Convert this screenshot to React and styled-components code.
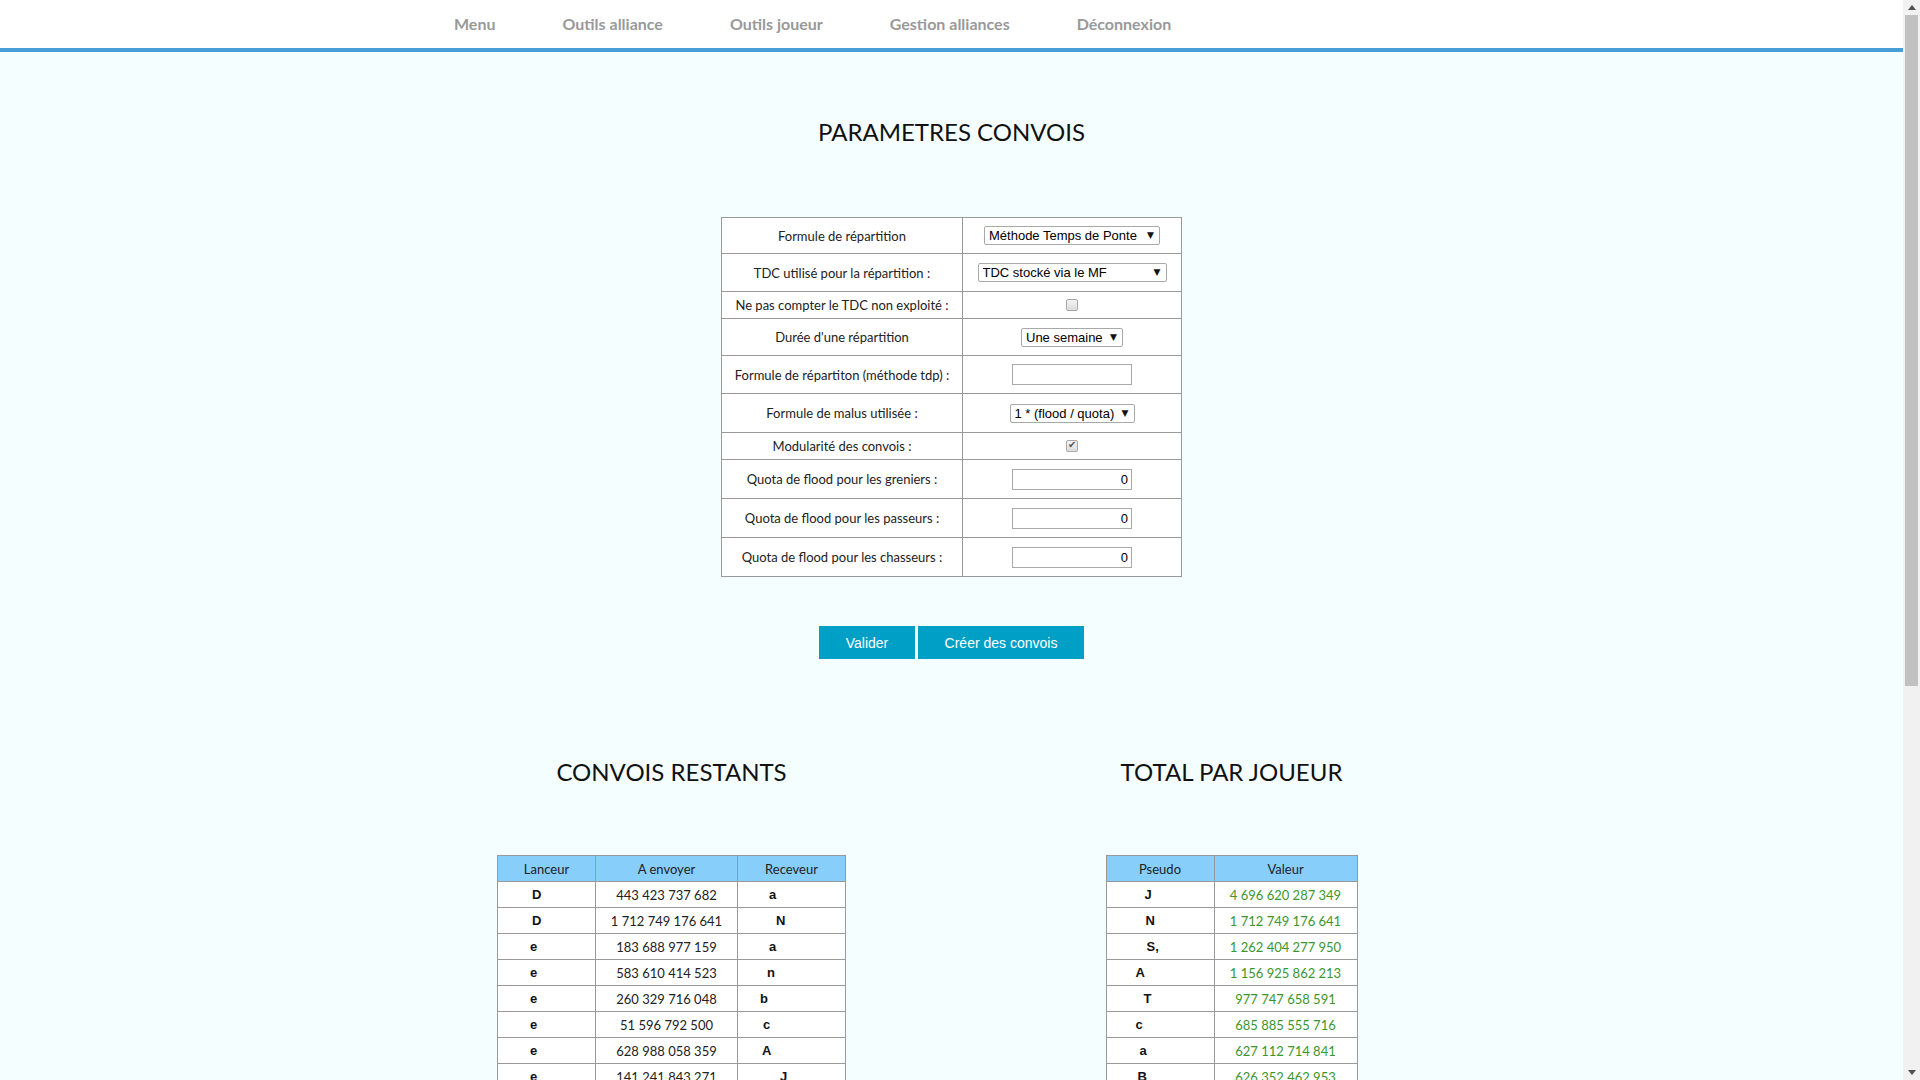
import styled, { createGlobalStyle } from "styled-components";

const GlobalStyle = createGlobalStyle`
  html, body {
    margin: 0;
    padding: 0;
  }
  body {
    background-color: #f4fefe;
    font-family: Lato, "Open Sans", sans-serif;
    color: #222;
  }
`;

const Page = styled.div`
  margin-right: 17px;
`;

/* fake browser scrollbar, as seen on the capture */
const ScrollTrack = styled.div`
  position: fixed;
  top: 0;
  right: 0;
  bottom: 0;
  width: 17px;
  background-color: #f1f1f1;
  display: flex;
  flex-direction: column;
  align-items: center;
`;

const ScrollArrow = styled.div`
  height: 15px;
  width: 17px;
  display: flex;
  align-items: center;
  justify-content: center;
`;

const ScrollThumb = styled.div`
  width: 13px;
  height: 671px;
  background-color: #c1c1c1;
`;

const ScrollRest = styled.div`
  flex: 1;
`;

const NavBar = styled.nav`
  background-color: #ffffff;
  height: 48px;
  box-sizing: content-box;
  border-bottom: 4px solid #489ed6;
  display: flex;
  align-items: center;
  padding-left: 454px;
  gap: 67px;
`;

const NavLink = styled.a`
  font-family: Lato, sans-serif;
  font-weight: 700;
  font-size: 16px;
  color: #999999;
  text-decoration: none;
  margin-bottom: 2px;
  cursor: pointer;
`;

const Main = styled.main`
  display: flex;
  flex-direction: column;
  align-items: center;
  padding-bottom: 133px;
`;

const Title = styled.h2`
  margin: ${({ mt }) => mt}px 0 0;
  font-family: Lato, sans-serif;
  font-weight: 400;
  font-size: 24px;
  line-height: 28px;
  color: #111;
  text-align: center;
`;

const ParamTable = styled.table`
  margin-top: 71px;
  border-collapse: collapse;
  background-color: #ffffff;
  border: 1px solid #999;
  font-size: 13px;

  td {
    border: 1px solid #999;
    padding: 0;
    text-align: center;
    vertical-align: middle;
  }
`;

const LabelCell = styled.td`
  width: 240px;
  height: ${({ h }) => h - 1}px;
  color: #222;
`;

const ValueCell = styled.td`
  width: 218px;
`;

const SelectWrap = styled.span`
  position: relative;
  display: inline-block;
  vertical-align: middle;
`;

const Select = styled.select`
  appearance: none;
  -webkit-appearance: none;
  width: ${({ w }) => w}px;
  height: 19px;
  border: 1px solid #a9a9a9;
  border-radius: 2px;
  background-color: #ffffff;
  font-family: "Liberation Sans", Arial, sans-serif;
  font-size: 13px;
  color: #000;
  padding: 0 18px 0 4px;
  margin: 0;
  display: block;
`;

const Arrow = styled.span`
  position: absolute;
  right: 6px;
  top: 4px;
  font-family: "DejaVu Sans", sans-serif;
  font-size: 9px;
  line-height: 11px;
  color: #111;
  pointer-events: none;
`;

const TextInput = styled.input`
  width: 120px;
  height: 21px;
  box-sizing: border-box;
  border: 1px solid #a9a9a9;
  background-color: #ffffff;
  font-family: "Liberation Sans", Arial, sans-serif;
  font-size: 13px;
  text-align: ${({ right }) => (right ? "right" : "left")};
  padding: 1px 3px;
  margin: 0;
  vertical-align: middle;
`;

const CheckBox = styled.input.attrs({ type: "checkbox" })`
  appearance: none;
  -webkit-appearance: none;
  width: 12px;
  height: 12px;
  margin: 0 0 2px 0;
  border: 1px solid #a8a8a8;
  border-radius: 2px;
  background: linear-gradient(#f4f4f4, #dcdcdc);
  position: relative;
  vertical-align: middle;

  &:checked::after {
    content: "✔";
    position: absolute;
    left: 1px;
    top: -2px;
    font-size: 10px;
    color: #555;
    font-family: "DejaVu Sans", sans-serif;
  }
`;

const ButtonRow = styled.div`
  margin-top: 49px;
  display: flex;
  gap: 3px;
`;

const Button = styled.button`
  width: ${({ w }) => w}px;
  height: 33px;
  padding: 0;
  border: none;
  background-color: #00a0c6;
  color: #ffffff;
  font-family: "Liberation Sans", Arial, sans-serif;
  font-size: 14px;
  cursor: pointer;
`;

const Columns = styled.div`
  width: 1120px;
  display: grid;
  grid-template-columns: 1fr 1fr;
`;

const Column = styled.section`
  display: flex;
  flex-direction: column;
  align-items: center;
`;

const DataTable = styled.table`
  margin-top: 69px;
  border-collapse: collapse;
  background-color: #ffffff;
  font-size: 13px;

  th,
  td {
    border: 1px solid #999;
    height: 25px;
    padding: 0;
    text-align: center;
    vertical-align: middle;
  }

  th {
    background-color: #87cefa;
    font-weight: 400;
    color: #222;
  }
`;

const HeadCell = styled.th`
  width: ${({ w }) => w - 1}px;
`;

const NameCell = styled.td`
  && {
    text-align: left;
    padding-left: ${({ pad }) => pad}px;
  }
  font-family: "Liberation Sans", Arial, sans-serif;
  font-weight: 700;
  font-size: 13px;
  color: #111;
`;

const NumberCell = styled.td`
  color: ${({ green }) => (green ? "#3b962c" : "#222")};
`;

const params = [
  { label: "Formule de répartition", h: 36, kind: "select", w: 176, value: "Méthode Temps de Ponte" },
  { label: "TDC utilisé pour la répartition :", h: 38, kind: "select", w: 189, value: "TDC stocké via le MF" },
  { label: "Ne pas compter le TDC non exploité :", h: 27, kind: "check", checked: false },
  { label: "Durée d'une répartition", h: 37, kind: "select", w: 102, value: "Une semaine" },
  { label: "Formule de répartiton (méthode tdp) :", h: 38, kind: "input", value: "" },
  { label: "Formule de malus utilisée :", h: 39, kind: "select", w: 125, value: "1 * (flood / quota)" },
  { label: "Modularité des convois :", h: 27, kind: "check", checked: true },
  { label: "Quota de flood pour les greniers :", h: 39, kind: "input", value: "0", right: true },
  { label: "Quota de flood pour les passeurs :", h: 39, kind: "input", value: "0", right: true },
  { label: "Quota de flood pour les chasseurs :", h: 39, kind: "input", value: "0", right: true },
];

const convois = [
  ["D", 34, "443 423 737 682", "a", 31],
  ["D", 34, "1 712 749 176 641", "N", 38],
  ["e", 32, "183 688 977 159", "a", 31],
  ["e", 32, "583 610 414 523", "n", 29],
  ["e", 32, "260 329 716 048", "b", 22],
  ["e", 32, "51 596 792 500", "c", 25],
  ["e", 32, "628 988 058 359", "A", 24],
  ["e", 32, "141 241 843 271", "J", 42],
  ["e", 32, "98 517 330 412", "T", 30],
  ["S", 34, "402 118 659 730", "c", 27],
  ["S", 34, "215 774 903 286", "a", 31],
  ["S", 34, "88 402 117 954", "B", 28],
  ["A", 30, "311 960 245 178", "J", 40],
  ["A", 30, "176 338 409 622", "T", 33],
  ["T", 36, "204 519 887 130", "c", 27],
  ["T", 36, "95 631 004 775", "B", 28],
  ["c", 31, "142 886 310 529", "J", 40],
  ["a", 32, "63 275 498 016", "B", 28],
  ["a", 32, "117 904 552 381", "J", 40],
  ["B", 30, "72 118 640 905", "J", 40],
  ["B", 30, "134 527 806 219", "T", 33],
  ["n", 31, "56 084 331 762", "J", 40],
  ["n", 31, "203 611 478 095", "c", 27],
  ["b", 31, "88 930 415 207", "J", 40],
  ["b", 31, "171 399 026 584", "a", 31],
  ["c", 31, "45 712 908 133", "B", 28],
];

const totals = [
  ["J", 38, "4 696 620 287 349"],
  ["N", 39, "1 712 749 176 641"],
  ["S,", 40, "1 262 404 277 950"],
  ["A", 29, "1 156 925 862 213"],
  ["T", 37, "977 747 658 591"],
  ["c", 29, "685 885 555 716"],
  ["a", 33, "627 112 714 841"],
  ["B", 31, "626 352 462 953"],
  ["n", 32, "412 930 118 704"],
  ["b", 33, "260 329 716 048"],
  ["D", 30, "0"],
  ["e", 32, "0"],
];

const ParamControl = ({ row }) => {
  if (row.kind === "select") {
    return (
      <SelectWrap>
        <Select w={row.w} defaultValue={row.value}>
          <option>{row.value}</option>
        </Select>
        <Arrow>▼</Arrow>
      </SelectWrap>
    );
  }
  if (row.kind === "check") {
    return <CheckBox defaultChecked={row.checked} />;
  }
  return <TextInput type="text" defaultValue={row.value} right={row.right} />;
};

const FakeScrollbar = () => (
  <ScrollTrack>
    <ScrollArrow>
      <svg width="8" height="5" viewBox="0 0 8 5">
        <polygon points="4,0 8,5 0,5" fill="#505050" />
      </svg>
    </ScrollArrow>
    <ScrollThumb />
    <ScrollRest />
    <ScrollArrow>
      <svg width="8" height="5" viewBox="0 0 8 5">
        <polygon points="0,0 8,0 4,5" fill="#505050" />
      </svg>
    </ScrollArrow>
  </ScrollTrack>
);

const App = () => {
  return (
    <>
      <GlobalStyle />
      <Page>
        <NavBar>
          <NavLink>Menu</NavLink>
          <NavLink>Outils alliance</NavLink>
          <NavLink>Outils joueur</NavLink>
          <NavLink>Gestion alliances</NavLink>
          <NavLink>Déconnexion</NavLink>
        </NavBar>

        <Main>
          <Title mt={66}>PARAMETRES CONVOIS</Title>

          <ParamTable>
            <tbody>
              {params.map((row) => (
                <tr key={row.label}>
                  <LabelCell h={row.h}>{row.label}</LabelCell>
                  <ValueCell>
                    <ParamControl row={row} />
                  </ValueCell>
                </tr>
              ))}
            </tbody>
          </ParamTable>

          <ButtonRow>
            <Button w={96}>Valider</Button>
            <Button w={166}>Créer des convois</Button>
          </ButtonRow>

          <Columns>
            <Column>
              <Title mt={99}>CONVOIS RESTANTS</Title>
              <DataTable>
                <thead>
                  <tr>
                    <HeadCell w={98}>Lanceur</HeadCell>
                    <HeadCell w={142}>A envoyer</HeadCell>
                    <HeadCell w={108}>Receveur</HeadCell>
                  </tr>
                </thead>
                <tbody>
                  {convois.map(([from, fromPad, amount, to, toPad], i) => (
                    <tr key={i}>
                      <NameCell pad={fromPad}>{from}</NameCell>
                      <NumberCell>{amount}</NumberCell>
                      <NameCell pad={toPad}>{to}</NameCell>
                    </tr>
                  ))}
                </tbody>
              </DataTable>
            </Column>

            <Column>
              <Title mt={99}>TOTAL PAR JOUEUR</Title>
              <DataTable>
                <thead>
                  <tr>
                    <HeadCell w={108}>Pseudo</HeadCell>
                    <HeadCell w={143}>Valeur</HeadCell>
                  </tr>
                </thead>
                <tbody>
                  {totals.map(([name, pad, value], i) => (
                    <tr key={i}>
                      <NameCell pad={pad}>{name}</NameCell>
                      <NumberCell green>{value}</NumberCell>
                    </tr>
                  ))}
                </tbody>
              </DataTable>
            </Column>
          </Columns>
        </Main>
      </Page>
      <FakeScrollbar />
    </>
  );
};

export default App;
